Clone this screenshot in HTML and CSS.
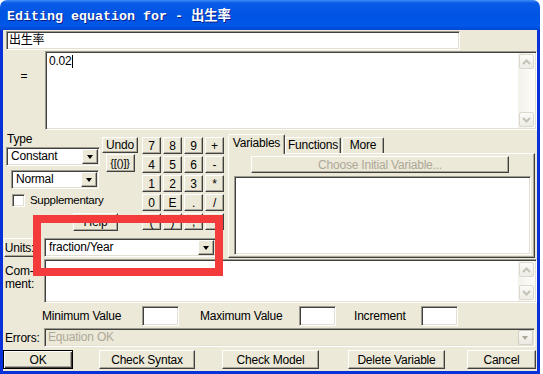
FILE: index.html
```html
<!DOCTYPE html>
<html lang="en">
<head>
    <meta charset="UTF-8">
    <meta name="viewport" content="width=device-width, initial-scale=1.0">
    <title>Editing equation</title>
    <link rel="stylesheet" href="styles.css">
</head>
<body>
    <div class="window">
        <div class="title">Editing equation for - 出生率</div>
        <div class="frame">
            <div class="row-name">
                <div class="field name">出生率</div>
            </div>

            <div class="row-eq">
                <div class="eq-label">=</div>
                <div class="field memo eq">
                    <div class="memo-text">0.02<span class="caret"></span></div>
                    <div class="scroll">
                        <div class="arrow"><svg width="9" height="6" viewBox="0 0 9 6"><polyline points="1,5 4.5,1.5 8,5" /></svg></div>
                        <div class="arrow"><svg width="9" height="6" viewBox="0 0 9 6"><polyline points="1,1 4.5,4.5 8,1" /></svg></div>
                    </div>
                </div>
            </div>

            <div class="middle">
                <div class="left">
                    <div class="top">
                        <div class="group">
                            <div class="type-row">
                                <div class="type-col">
                                    <div class="type-label">Type</div>
                                    <div class="field select constant"><span>Constant</span><div class="drop"></div></div>
                                    <div class="field select normal"><span>Normal</span><div class="drop"></div></div>
                                    <div class="check-row"><div class="check"></div><span>Supplementary</span></div>
                                </div>
                                <div class="undo-col">
                                    <button class="btn undo">Undo</button>
                                    <button class="btn brackets">{[()]}</button>
                                </div>
                            </div>
                            <button class="btn help">Help</button>
                        </div>
                        <div class="keypad">
                            <button class="btn">7</button>
                            <button class="btn">8</button>
                            <button class="btn">9</button>
                            <button class="btn">+</button>
                            <button class="btn">4</button>
                            <button class="btn">5</button>
                            <button class="btn">6</button>
                            <button class="btn">-</button>
                            <button class="btn">1</button>
                            <button class="btn">2</button>
                            <button class="btn">3</button>
                            <button class="btn">*</button>
                            <button class="btn">0</button>
                            <button class="btn">E</button>
                            <button class="btn">.</button>
                            <button class="btn">/</button>
                            <button class="btn">(</button>
                            <button class="btn">)</button>
                            <button class="btn">,</button>
                            <button class="btn">^</button>
                        </div>
                    </div>
                    <div class="units-row">
                        <button class="btn units">Units:</button>
                        <div class="field select units-select"><span>fraction/Year</span><div class="drop"></div></div>
                    </div>
                </div>

                <div class="tabs">
                    <div class="tab-strip">
                        <div class="tab active">Variables</div>
                        <div class="tab functions">Functions</div>
                        <div class="tab more">More</div>
                    </div>
                    <div class="tab-panel">
                        <button class="btn choose">Choose Initial Variable...</button>
                        <div class="field list"></div>
                    </div>
                </div>
            </div>

            <div class="row-comment">
                <div class="comment-label">Com-<br>ment:</div>
                <div class="field memo comment">
                    <div class="memo-text"></div>
                    <div class="scroll">
                        <div class="arrow"><svg width="9" height="6" viewBox="0 0 9 6"><polyline points="1,5 4.5,1.5 8,5" /></svg></div>
                        <div class="arrow"><svg width="9" height="6" viewBox="0 0 9 6"><polyline points="1,1 4.5,4.5 8,1" /></svg></div>
                    </div>
                </div>
            </div>

            <div class="row-range">
                <span class="range-label min">Minimum Value</span>
                <div class="field small"></div>
                <span class="range-label max">Maximum Value</span>
                <div class="field small"></div>
                <span class="range-label inc">Increment</span>
                <div class="field small"></div>
            </div>

            <div class="row-errors">
                <span class="errors-label">Errors:</span>
                <div class="field errors"><span>Equation OK</span><div class="drop-off"></div></div>
            </div>

            <div class="row-buttons">
                <button class="btn ok">OK</button>
                <button class="btn syntax">Check Syntax</button>
                <button class="btn model">Check Model</button>
                <button class="btn delete">Delete Variable</button>
                <button class="btn cancel">Cancel</button>
            </div>
        </div>

        <!-- marca vermelha por cima da tela -->
        <div class="highlight"></div>
    </div>
</body>
</html>
```

FILE: styles.css
```css
* {
    margin: 0;
    padding: 0;
    box-sizing: border-box;
}

body {
    background: #fff;
    font-family: "Liberation Sans", Arial, "Noto Sans CJK SC", sans-serif;
    font-size: 11px;
    letter-spacing: -0.2px;
    color: #000;
}

.window {
    position: relative;
    width: 540px;
    height: 374px;
}

.title {
    height: 30px;
    padding: 3px 0 0 7px;
    line-height: 27px;
    border-radius: 7px 7px 0 0;
    background: linear-gradient(#3d8cf5 0, #0a5ae8 3px, #0054e3 50%, #0057e8 85%, #0046d4 100%);
    color: #fff;
    font-family: "Liberation Mono", "Noto Sans CJK SC", monospace;
    font-size: 13.33px;
    font-weight: bold;
    letter-spacing: 0;
    text-shadow: 1px 1px #0a1e8a;
}

.frame {
    height: 344px;
    background: #ECE9D8;
    border: 3px solid #0831d9;
    border-top: none;
}

/* campos afundados */
.field {
    background: #fff;
    border: 1px solid;
    border-color: #9d9a8e #fff #fff #9d9a8e;
    box-shadow: inset 1px 1px #404040, inset -1px -1px #e3e0d2;
}

.btn {
    display: flex;
    align-items: center;
    justify-content: center;
    background: #ECE9D8;
    border: 1px solid;
    border-color: #fff #404040 #404040 #fff;
    box-shadow: inset -1px -1px #aca899;
    font: inherit;
    letter-spacing: inherit;
    color: #000;
}

.row-name {
    display: flex;
    padding: 1px 0 0 3px;
}

.name {
    width: 454px;
    height: 19px;
    padding-left: 2px;
    font-size: 12px;
    line-height: 17px;
}

.row-eq {
    display: flex;
    margin-top: 1px;
}

.eq-label {
    width: 42px;
    padding-top: 18px;
    text-align: center;
    font-size: 12px;
}

.memo {
    display: flex;
}

.eq {
    width: 492px;
    height: 79px;
}

.memo-text {
    flex: 1;
    padding: 3px 0 0 3px;
    font-size: 12px;
    line-height: 13px;
}

.caret {
    display: inline-block;
    width: 1px;
    height: 13px;
    background: #000;
    vertical-align: top;
}

.scroll {
    width: 17px;
    margin: 1px 1px 1px 0;
    display: flex;
    flex-direction: column;
    justify-content: space-between;
    align-items: center;
    padding: 1px 0;
    background: linear-gradient(90deg, #f3f1ea, #fdfdfa);
}

.arrow {
    width: 15px;
    height: 15px;
    display: flex;
    align-items: center;
    justify-content: center;
    border: 1px solid #dcdad0;
    border-radius: 2px;
    background: linear-gradient(#fbfbf8, #eeece3);
}

.arrow polyline {
    fill: none;
    stroke: #c4c2b6;
    stroke-width: 2;
}

.middle {
    display: flex;
    margin-top: 2px;
}

.left {
    width: 219px;
}

.top {
    display: flex;
}

.type-row {
    display: flex;
}

.type-col {
    width: 97px;
    padding-left: 3px;
}

.type-label {
    height: 14px;
    line-height: 14px;
    padding-left: 1px;
    font-size: 12px;
}

.select {
    display: flex;
    height: 19px;
    padding: 1px;
}

.select span {
    flex: 1;
    padding-left: 3px;
    line-height: 15px;
    font-size: 12px;
}

.drop {
    position: relative;
    width: 16px;
    background: #ECE9D8;
    border: 1px solid;
    border-color: #fff #404040 #404040 #fff;
    box-shadow: inset -1px -1px #aca899;
}

.drop::after {
    content: "";
    position: absolute;
    left: 4px;
    top: 5px;
    border-left: 3.5px solid transparent;
    border-right: 3.5px solid transparent;
    border-top: 4px solid #000;
}

.constant {
    width: 94px;
    margin-top: 1px;
}

.normal {
    width: 88px;
    margin: 4px 0 0 5px;
}

.check-row {
    display: flex;
    align-items: center;
    gap: 5px;
    height: 14px;
    margin: 4px 0 0 6px;
    font-size: 11.5px;
    letter-spacing: -0.3px;
    white-space: nowrap;
}

.check {
    flex-shrink: 0;
    width: 13px;
    height: 13px;
    background: #fff;
    border: 1px solid;
    border-color: #9d9a8e #fff #fff #9d9a8e;
    box-shadow: inset 1px 1px #404040, inset -1px -1px #e3e0d2;
}

.undo-col {
    display: flex;
    flex-direction: column;
    align-items: center;
    width: 36px;
    margin: 5px 0 0 2px;
}

.undo {
    width: 36px;
    height: 16px;
    font-size: 12px;
}

.brackets {
    width: 29px;
    height: 18px;
    margin-top: 1px;
}

.help {
    width: 45px;
    height: 18px;
    margin: 6px 0 0 70px;
    font-size: 12px;
}

.keypad {
    display: grid;
    grid-template-columns: repeat(4, 19px);
    grid-auto-rows: 17px;
    gap: 2px;
    margin: 5px 0 0 4px;
}

.keypad .btn {
    font-size: 12px;
}

.units-row {
    display: flex;
    margin-top: 7px;
}

.units {
    width: 31px;
    height: 19px;
    margin-left: 1px;
    font-size: 12px;
}

.units-select {
    width: 172px;
    margin-left: 9px;
}

.tabs {
    width: 307px;
    margin-left: 6px;
}

.tab-strip {
    display: flex;
    align-items: flex-end;
    height: 21px;
}

.tab {
    height: 16px;
    line-height: 15px;
    text-align: center;
    font-size: 12px;
    background: #ECE9D8;
    border: 1px solid;
    border-bottom: none;
    border-color: #fff #404040 transparent #fff;
    border-radius: 2px 2px 0 0;
    box-shadow: inset -1px 0 #aca899;
}

.tab.active {
    position: relative;
    z-index: 1;
    width: 57px;
    height: 20px;
    margin-bottom: -1px;
    line-height: 16px;
}

.functions {
    width: 56px;
}

.more {
    width: 42px;
    margin-left: 1px;
}

.tab-panel {
    height: 105px;
    border: 1px solid;
    border-color: #fff #404040 #404040 #fff;
    box-shadow: inset -1px -1px #aca899;
    padding: 2px 0 0 5px;
}

.choose {
    width: 258px;
    height: 17px;
    margin-left: 17px;
    font-size: 12px;
    color: #aca899;
}

.list {
    width: 297px;
    height: 79px;
    margin-top: 3px;
}

.row-comment {
    display: flex;
    margin-top: 1px;
}

.comment-label {
    width: 41px;
    padding: 6px 0 0 2px;
    line-height: 13px;
    font-size: 12px;
}

.comment {
    width: 493px;
    height: 44px;
}

.row-range {
    display: flex;
    align-items: center;
    height: 20px;
    margin-top: 3px;
    font-size: 12px;
}

.range-label {
    display: block;
}

.min {
    width: 100px;
    margin-left: 39px;
}

.max {
    width: 99px;
    margin-left: 21px;
}

.inc {
    width: 67px;
    margin-left: 18px;
}

.small {
    width: 37px;
    height: 20px;
}

.row-errors {
    display: flex;
    align-items: center;
    margin-top: 2px;
    font-size: 12px;
}

.errors-label {
    width: 41px;
    padding-left: 2px;
}

.errors {
    display: flex;
    width: 491px;
    height: 19px;
    padding: 1px 1px 1px 0;
    background: #ECE9D8;
}

.errors span {
    flex: 1;
    padding-left: 3px;
    line-height: 15px;
    color: #aca899;
}

.drop-off {
    position: relative;
    width: 15px;
    border: 1px solid #d2cfc4;
    border-radius: 2px;
    background: linear-gradient(#f9f8f4, #ebe9e0);
}

.drop-off::after {
    content: "";
    position: absolute;
    left: 3px;
    top: 5px;
    border-left: 3.5px solid transparent;
    border-right: 3.5px solid transparent;
    border-top: 4px solid #aca899;
}

.row-buttons {
    display: flex;
    margin-top: 3px;
    font-size: 12px;
}

.row-buttons .btn {
    height: 19px;
}

.ok {
    width: 70px;
    border-color: #000;
    box-shadow: inset 1px 1px #fff, inset -1px -1px #404040, inset -2px -2px #aca899;
}

.syntax {
    width: 96px;
    margin-left: 26px;
}

.model {
    width: 97px;
    margin-left: 27px;
}

.delete {
    width: 97px;
    margin-left: 29px;
}

.cancel {
    width: 69px;
    margin-left: 22px;
}

.highlight {
    position: absolute;
    left: 33px;
    top: 215px;
    width: 190px;
    height: 61px;
    border: 8px solid #f43b3b;
}
```
